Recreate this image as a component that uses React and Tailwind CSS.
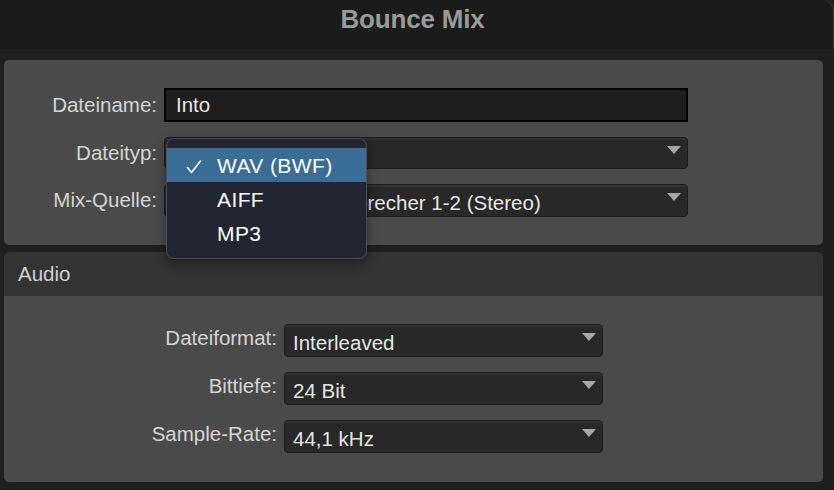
import React from "react";

const FONT = { fontFamily: '"Liberation Sans", Arial, sans-serif' };

function Arrow() {
  return (
    <svg width="14" height="8" viewBox="0 0 14 8" className="absolute right-[6px] top-[8px]">
      <path d="M0 0 H14 L7 8 Z" fill="#a6a6a6" />
    </svg>
  );
}

function Select({ value, w, h, pl = "pl-[8px]" }) {
  return (
    <div
      className={`relative ${w} ${h} rounded-[4px] border border-[#1d1d1d] bg-[#282828] shadow-[inset_0_2px_0_#333333] overflow-hidden`}
    >
      <div className={`h-full flex items-center pt-[5px] ${pl} text-[20.5px] leading-none text-[#e6e6e6] whitespace-nowrap`}>
        {value}
      </div>
      <Arrow />
    </div>
  );
}

export default function App() {
  return (
    <div style={FONT} className="relative w-[834px] h-[490px] bg-[#1f1f1f] overflow-hidden flex flex-col">
      {/* Title bar */}
      <div className="h-[49px] shrink-0 bg-[#1b1b1b] rounded-tr-[12px] border-r border-[#3c3c3c] flex justify-center items-start pt-[4px] pr-[8px]">
        <span className="text-[26px] leading-[30px] font-bold tracking-[-0.2px] text-[#9a9a9a]">Bounce Mix</span>
      </div>
      <div className="h-[11px] shrink-0" />

      {/* Top panel */}
      <div className="ml-[4px] w-[819px] h-[185px] shrink-0 rounded-[5px] bg-[#4a4a4a] pt-[28px]">
        <div className="flex items-center h-[34px]">
          <div className="w-[160px] pr-[7px] text-right text-[20.5px] leading-none text-[#d5d5d5]">Dateiname:</div>
          <div className="w-[524px] h-[34px] border-2 border-black bg-[#1e1e1e] flex items-center pl-[10px] text-[20.5px] leading-none text-[#e6e6e6]">
            Into
          </div>
        </div>
        <div className="flex items-center h-[32px] mt-[15px]">
          <div className="w-[160px] pr-[7px] text-right text-[20.5px] leading-none text-[#d5d5d5]">Dateityp:</div>
          <Select value="" w="w-[524px]" h="h-[32px]" />
        </div>
        <div className="flex items-center h-[33px] mt-[15px]">
          <div className="w-[160px] pr-[7px] text-right text-[20.5px] leading-none text-[#d5d5d5]">Mix-Quelle:</div>
          <Select value="Integrierte Lautsprecher 1-2 (Stereo)" w="w-[524px]" h="h-[33px]" pl="pl-[43px]" />
        </div>
      </div>

      <div className="h-[7px] shrink-0" />

      {/* Audio panel */}
      <div className="ml-[4px] w-[819px] h-[230px] shrink-0 rounded-[5px] overflow-hidden flex flex-col">
        <div className="h-[44px] shrink-0 bg-[#333333] flex items-center pl-[14px] text-[20.5px] leading-none text-[#d0d0d0]">
          Audio
        </div>
        <div className="flex-1 bg-[#4a4a4a] pt-[28px]">
          {[
            ["Dateiformat:", "Interleaved"],
            ["Bittiefe:", "24 Bit"],
            ["Sample-Rate:", "44,1 kHz"],
          ].map(([label, value], i) => (
            <div key={label} className={`flex items-center h-[33px] ${i > 0 ? "mt-[15px]" : ""}`}>
              <div className="w-[280px] pr-[7px] pb-[5px] text-right text-[20.5px] leading-none text-[#d5d5d5]">{label}</div>
              <Select value={value} w="w-[319px]" h="h-[33px]" />
            </div>
          ))}
        </div>
      </div>

      {/* Dropdown menu */}
      <div className="absolute left-[166px] top-[138px] w-[201px] h-[121px] rounded-[8px] border border-[#4a4d57] bg-[#232632] pt-[9px] overflow-hidden shadow-[0_4px_12px_rgba(0,0,0,0.4)]">
        <div className="relative h-[34px] bg-[#3a6d96] flex items-center pl-[50px] text-[21px] leading-none tracking-[0.4px] text-white">
          <svg width="16" height="14" viewBox="0 0 16 14" className="absolute left-[19px] top-[12px]">
            <path d="M1.5 7.5 L5.5 12.5 L14.5 1" fill="none" stroke="#ffffff" strokeWidth="1.6" strokeLinecap="round" strokeLinejoin="round" />
          </svg>
          WAV (BWF)
        </div>
        <div className="h-[34px] flex items-center pl-[50px] text-[21px] leading-none tracking-[0.4px] text-white">AIFF</div>
        <div className="h-[34px] flex items-center pl-[50px] text-[21px] leading-none tracking-[0.4px] text-white">MP3</div>
      </div>
    </div>
  );
}
